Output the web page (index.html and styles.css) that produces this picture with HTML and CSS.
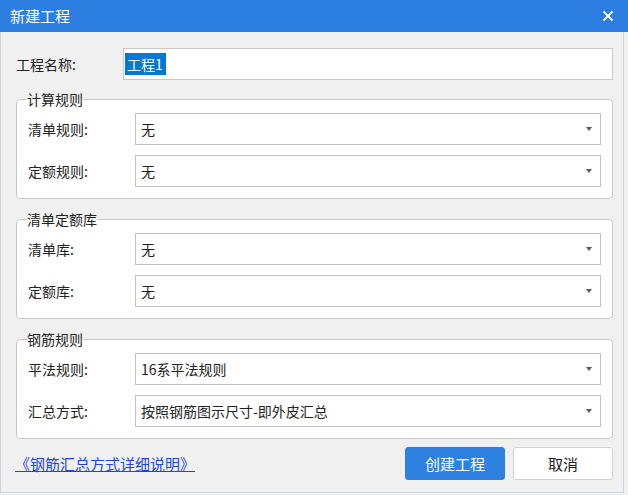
FILE: index.html
```html
<!DOCTYPE html>
<html lang="zh-CN">
<head>
<meta charset="utf-8">
<link rel="stylesheet" href="styles.css">
</head>
<body>
<div class="window">
  <div class="titlebar">
    <span class="title">新建工程</span>
    <svg class="close" width="10" height="10" viewBox="0 0 10 10"><path d="M1 1 L9 9 M9 1 L1 9" stroke="#fff" stroke-width="1.8" stroke-linecap="square"/></svg>
  </div>
  <div class="panel">
    <div class="name-row">
      <span class="label">工程名称:</span>
      <div class="input"><span class="sel">工程1</span></div>
    </div>

    <fieldset class="group">
      <legend>计算规则</legend>
      <div class="row"><span class="label">清单规则:</span><div class="select"><span>无</span><i class="arrow"></i></div></div>
      <div class="row"><span class="label">定额规则:</span><div class="select"><span>无</span><i class="arrow"></i></div></div>
    </fieldset>

    <fieldset class="group">
      <legend>清单定额库</legend>
      <div class="row"><span class="label">清单库:</span><div class="select"><span>无</span><i class="arrow"></i></div></div>
      <div class="row"><span class="label">定额库:</span><div class="select"><span>无</span><i class="arrow"></i></div></div>
    </fieldset>

    <fieldset class="group">
      <legend>钢筋规则</legend>
      <div class="row"><span class="label">平法规则:</span><div class="select"><span>16系平法规则</span><i class="arrow"></i></div></div>
      <div class="row"><span class="label">汇总方式:</span><div class="select"><span>按照钢筋图示尺寸-即外皮汇总</span><i class="arrow"></i></div></div>
    </fieldset>

    <div class="footer">
      <a class="link" href="#">《钢筋汇总方式详细说明》</a>
      <div class="buttons">
        <button class="btn primary">创建工程</button>
        <button class="btn">取消</button>
      </div>
    </div>
  </div>
</div>
</body>
</html>
```

FILE: styles.css
```css
* { box-sizing: border-box; }
html, body { margin: 0; padding: 0; }
body {
  background: #f0f0f0;
  font-family: "Noto Sans CJK SC", "Microsoft YaHei", sans-serif;
  font-size: 14px;
  color: #222;
  width: 628px;
  height: 495px;
  overflow: hidden;
}
.window { width: 628px; }
.titlebar {
  height: 32px;
  background: #2c7fe0;
  display: flex;
  align-items: center;
  justify-content: space-between;
  padding: 0 15px 0 10px;
}
.title { color: #fff; font-size: 15px; line-height: 20px; }
.close { display: block; }

.panel {
  width: 624px;
  height: 461px;
  border: 1px solid #cdd4dc;
  border-top: none;
  background: #f0f0f0;
  padding: 16px 10px 0 15px;
}
.name-row {
  display: flex;
  align-items: center;
  height: 32px;
  margin-bottom: 9px;
}
.label { width: 107px; flex: none; line-height: 20px; }
.input {
  width: 490px;
  height: 32px;
  background: #fff;
  border: 1px solid #c9c9c9;
  display: flex;
  align-items: center;
  padding-left: 1px;
}
.sel {
  background: #0078d7;
  color: #fff;
  line-height: 22px;
  padding: 0 3px 0 2px;
}

.group {
  margin: 0 0 10px 0;
  width: 597px;
  border: 1px solid #c6c6c6;
  border-radius: 4px;
  background: #fff;
  padding: 4px 11px 11px 11px;
  display: flex;
  flex-direction: column;
  gap: 10px;
}
.group legend {
  padding: 0;
  margin-left: -1px;
  line-height: 20px;
  color: #222;
}
.row { display: flex; align-items: center; }
.select {
  width: 466px;
  height: 32px;
  border: 1px solid #c3c3c3;
  background: #fff;
  display: flex;
  align-items: center;
  justify-content: space-between;
  padding: 0 8px 0 5px;
  line-height: 20px;
}
.arrow {
  width: 0; height: 0;
  border-left: 3.5px solid transparent;
  border-right: 3.5px solid transparent;
  border-top: 4px solid #5a5a5a;
}

.footer {
  display: flex;
  align-items: center;
  justify-content: space-between;
  margin-top: -2px;
  margin-left: -1px;
  width: 598px;
}
.link {
  color: #1d45e6;
  text-decoration: underline;
  font-size: 15px;
  line-height: 20px;
}
.buttons { display: flex; gap: 8px; }
.btn {
  width: 100px;
  height: 33px;
  border: 1px solid #d2d2d2;
  border-radius: 3px;
  background: #fff;
  font-family: inherit;
  font-size: 15px;
  color: #222;
  padding: 0;
}
.btn.primary {
  background: #2e80e1;
  border-color: #2e80e1;
  color: #fff;
}
```
